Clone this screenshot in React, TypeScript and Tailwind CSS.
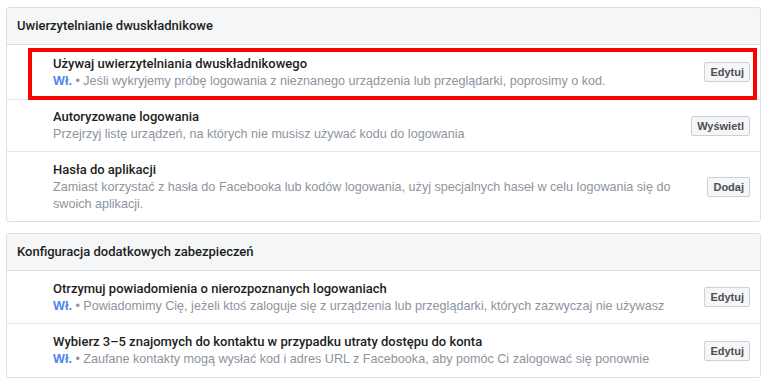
import React from "react";

type Row = {
  title: string;
  on?: boolean;
  desc: string;
  button: string;
  highlight?: boolean;
  h: string;
};

const card1: Row[] = [
  {
    title: "Używaj uwierzytelniania dwuskładnikowego",
    on: true,
    desc: "Jeśli wykryjemy próbę logowania z nieznanego urządzenia lub przeglądarki, poprosimy o kod.",
    button: "Edytuj",
    highlight: true,
    h: "h-[55px]",
  },
  {
    title: "Autoryzowane logowania",
    desc: "Przejrzyj listę urządzeń, na których nie musisz używać kodu do logowania",
    button: "Wyświetl",
    h: "h-[52px]",
  },
  {
    title: "Hasła do aplikacji",
    desc: "Zamiast korzystać z hasła do Facebooka lub kodów logowania, użyj specjalnych haseł w celu logowania się do swoich aplikacji.",
    button: "Dodaj",
    h: "h-[69px]",
  },
];

const card2: Row[] = [
  {
    title: "Otrzymuj powiadomienia o nierozpoznanych logowaniach",
    on: true,
    desc: "Powiadomimy Cię, jeżeli ktoś zaloguje się z urządzenia lub przeglądarki, których zazwyczaj nie używasz",
    button: "Edytuj",
    h: "h-[53px]",
  },
  {
    title: "Wybierz 3–5 znajomych do kontaktu w przypadku utraty dostępu do konta",
    on: true,
    desc: "Zaufane kontakty mogą wysłać kod i adres URL z Facebooka, aby pomóc Ci zalogować się ponownie",
    button: "Edytuj",
    h: "h-[53px]",
  },
];

function SettingRow({ row, last }: { row: Row; last: boolean }) {
  return (
    <div
      className={`relative flex items-center ${row.h} pl-[46px] pr-[10px] ${
        last ? "" : "border-b border-[#e5e6e9]"
      }`}
    >
      {row.highlight && (
        <div className="absolute left-[21px] right-[3px] top-[3px] bottom-[-1px] border-[4px] border-[#ff0000] pointer-events-none" />
      )}
      <div className="flex-1 min-w-0 pr-[20px]">
        <div className="text-[13px] leading-[17px] font-medium text-[#1c1e21] font-[Roboto,Arial,sans-serif]">
          {row.title}
        </div>
        <div className="text-[12.6px] leading-[17px] mt-[1px] text-[#8d949e]">
          {row.on && <span className="font-bold text-[#4f86ec]">Wł.</span>}
          {row.on && <span> • </span>}
          {row.desc}
        </div>
      </div>
      <button className="shrink-0 h-[20px] px-[5px] rounded-[2px] border border-[#ced0d4] bg-[#f5f6f7] text-[11px] font-bold text-[#4b4f56] leading-[18px]">
        {row.button}
      </button>
    </div>
  );
}

function Card({ title, rows }: { title: string; rows: Row[] }) {
  return (
    <div className="rounded-[3px] border border-[#dddfe2] bg-white">
      <div className="h-[37px] flex items-center px-[10px] bg-[#f5f6f7] border-b border-[#dddfe2] rounded-t-[3px] text-[13px] font-medium text-[#1c1e21] font-[Roboto,Arial,sans-serif]">
        {title}
      </div>
      {rows.map((r, i) => (
        <SettingRow key={i} row={r} last={i === rows.length - 1} />
      ))}
    </div>
  );
}

export default function App() {
  return (
    <div
      className="w-[768px] h-[382px] bg-white pt-[7px] pl-[6px] pr-[7px] flex flex-col gap-[11px] overflow-hidden"
      style={{ fontFamily: '"Liberation Sans", Arial, sans-serif' }}
    >
      <Card title="Uwierzytelnianie dwuskładnikowe" rows={card1} />
      <Card title="Konfiguracja dodatkowych zabezpieczeń" rows={card2} />
    </div>
  );
}
